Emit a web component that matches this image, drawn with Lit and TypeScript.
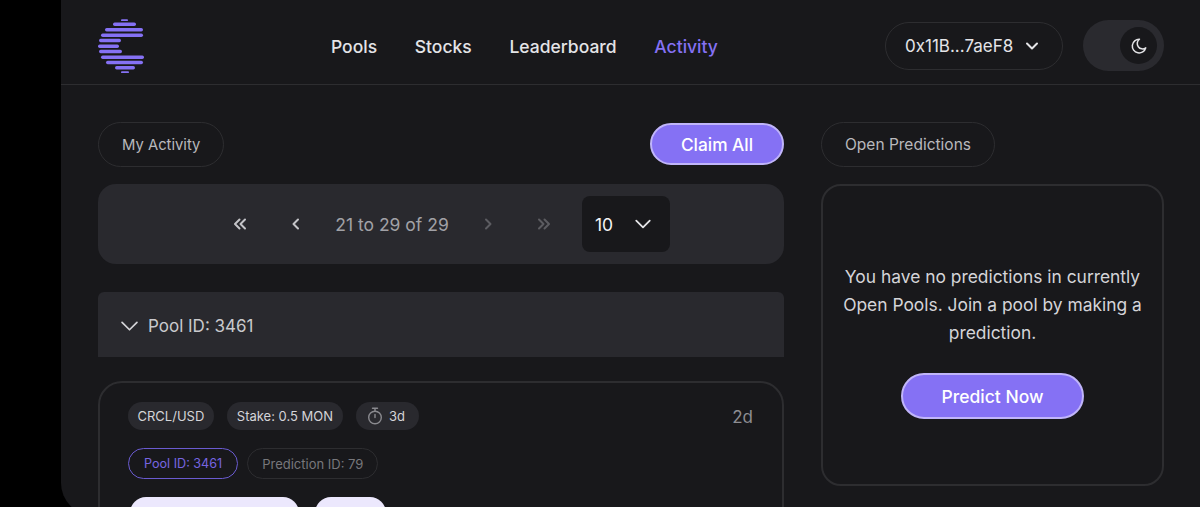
import { LitElement, html, svg, css } from "lit";
import { customElement } from "lit/decorators.js";

@customElement("app-root")
export class AppRoot extends LitElement {
  static styles = css`
    :host { display: block; width: 1200px; height: 507px; overflow: hidden; background: #000; font-family: Inter, "Liberation Sans", sans-serif; }
    * { box-sizing: border-box; }
    .panel { margin-left: 61px; width: 1139px; height: 515px; background: #18181b; border-bottom-left-radius: 32px; overflow: hidden; }
    .header { height: 85px; border-bottom: 1px solid #2d2d30; display: flex; align-items: center; padding: 9px 36px 0 37px; }
    .logo { width: 46px; height: 55px; flex: none; display: block; }
    .nav { display: flex; gap: 37.7px; margin-left: 187px; font-size: 17.5px; font-weight: 500; color: #e4e4e7; }
    .nav .on { color: #8571f4; }
    .wallet { margin: -2px 0 0 auto; width: 178px; height: 48px; border: 1px solid #2d2d30; border-radius: 24px; display: flex; align-items: center; padding-left: 19px; gap: 11px; font-size: 17px; color: #e4e4e7; }
    .toggle { margin: -2px 0 0 20px; width: 81px; height: 51px; border-radius: 26px; background: #2a2a2f; display: flex; align-items: center; justify-content: flex-end; padding-right: 7px; }
    .knob { width: 37px; height: 37px; border-radius: 50%; background: #18181b; display: flex; align-items: center; justify-content: center; }
    .main { display: grid; grid-template-columns: 686px 343px; column-gap: 37px; padding: 37px 36px 0 37px; }
    .left, .right { display: flex; flex-direction: column; }
    .top { display: flex; justify-content: space-between; align-items: flex-start; height: 45px; margin-bottom: 17px; }
    .tab { height: 45px; padding: 0 23px; border: 1px solid #2d2d30; border-radius: 23px; display: flex; align-items: center; font-size: 15.5px; color: #b9b9bd; width: fit-content; }
    .tab.my { font-size: 14.8px; }
    .cta { background: #8571f4; border: 2px solid #c0b5fa; color: #fff; border-radius: 24px; display: flex; align-items: center; justify-content: center; font-weight: 500; }
    .claim { width: 134px; height: 42px; font-size: 17.3px; margin-top: 1px; }
    .pager { height: 80px; border-radius: 18px; background: #29292e; display: flex; align-items: center; justify-content: center; color: #a1a1a6; font-size: 17.5px; }
    .pg { width: 56px; display: flex; justify-content: center; }
    .range { width: 136px; text-align: center; color: #a1a1a6; }
    .size { width: 88px; height: 56px; border-radius: 8px; background: #18181b; margin-left: 10px; display: flex; align-items: center; padding: 0 18px 0 13px; justify-content: space-between; color: #f4f4f5; font-size: 17.5px; }
    .pool { margin-top: 28px; height: 65px; background: #29292e; border-radius: 6px 6px 0 0; display: flex; align-items: center; padding: 2px 0 0 23px; gap: 10px; font-size: 17px; color: #c9c9cd; }
    .card { margin-top: 24px; height: 300px; border: 2px solid #2d2d30; border-radius: 24px; padding: 19px 28px; position: relative; }
    .row { display: flex; gap: 13.5px; }
    .chip { height: 28px; padding: 0 9.5px; border-radius: 14px; background: #29292e; display: flex; align-items: center; gap: 6px; font-size: 13px; color: #d4d4d8; }
    .chip.timer { padding: 0 14px 0 11px; }
    .age { position: absolute; right: 29px; top: 24px; font-size: 17px; color: #8d8d92; }
    .row2 { margin-top: 18px; gap: 9px; }
    .tag { height: 31px; padding: 0 14px; border-radius: 16px; border: 1px solid #2d2d30; display: flex; align-items: center; font-size: 13px; color: #77777c; }
    .tag.on { border-color: #6a5bd0; color: #7765e0; font-size: 12.6px; padding: 0 15px; }
    .row3 { margin-top: 18px; gap: 16px; padding-left: 2px; }
    .stub { height: 40px; border-radius: 16px; background: #ece8fd; }
    .stub.wide { width: 169px; }
    .stub.small { width: 71px; }
    .empty { height: 302px; border: 2px solid #2d2d30; border-radius: 20px; display: flex; flex-direction: column; align-items: center; padding: 77px 16px 0; }
    .empty p { margin: 0; font-size: 17.4px; line-height: 28px; color: #d4d4d8; text-align: center; }
    .predict { width: 183px; height: 46px; margin-top: 26px; padding-top: 1px; font-size: 17.5px; }
    svg { display: block; flex: none; }
  `;

  private logo() {
    const bars: number[][] = [
      [121, 128, 19.7, 1.8], [113, 136, 23.7, 3.4], [105, 143, 29.3, 3.4], [101, 143, 34.7, 3.4],
      [99, 121, 40, 3.4], [98, 119, 45.7, 3.4], [99, 122, 51, 3.4], [101, 144, 56.7, 3.4],
      [106, 143, 62, 3.4], [115, 135, 67.3, 3.4], [121, 129, 71.7, 1.8],
    ];
    return html`<svg class="logo" viewBox="98 18.5 46 55" fill="#8571f4">
      ${bars.map(([a, b, y, h]) => svg`<rect x=${a} y=${y - h / 2} width=${b - a} height=${h} rx=${h / 2} />`)}
    </svg>`;
  }

  private chevron(d: string, stroke: string, size = 16, sw = 2) {
    return html`<svg width=${size} height=${size} viewBox="0 0 16 16" fill="none" stroke=${stroke} stroke-width=${sw} stroke-linecap="round" stroke-linejoin="round"><path d=${d} /></svg>`;
  }

  render() {
    const down = "M3 5.5 8 10.5 13 5.5";
    return html`<div class="panel">
      <header class="header">
        ${this.logo()}
        <nav class="nav"><span>Pools</span><span>Stocks</span><span>Leaderboard</span><span class="on">Activity</span></nav>
        <div class="wallet"><span>0x11B...7aeF8</span>${this.chevron(down, "#e4e4e7", 16)}</div>
        <div class="toggle"><div class="knob">
          <svg width="18" height="18" viewBox="0 0 20 20" fill="none" stroke="#e4e4e7" stroke-width="1.7" stroke-linecap="round" stroke-linejoin="round"><path d="M10.5 2.5a7.6 7.6 0 1 0 7 9.6 5 5 0 0 1-7-9.6Z" /></svg>
        </div></div>
      </header>
      <div class="main">
        <section class="left">
          <div class="top"><div class="tab my">My Activity</div><div class="cta claim">Claim All</div></div>
          <div class="pager">
            <span class="pg">${this.chevron("M7.5 3.5 3 8l4.5 4.5M13 3.5 8.5 8l4.5 4.5", "#c4c4c8")}</span>
            <span class="pg">${this.chevron("M10 3.5 5.5 8l4.5 4.5", "#c4c4c8")}</span>
            <span class="range">21 to 29 of 29</span>
            <span class="pg">${this.chevron("M6 3.5 10.5 8 6 12.5", "#5c5c61")}</span>
            <span class="pg">${this.chevron("M3 3.5 7.5 8 3 12.5M8.5 3.5 13 8l-4.5 4.5", "#5c5c61")}</span>
            <div class="size"><span>10</span>${this.chevron("M2 5l6 6 6-6", "#e4e4e7", 18, 1.6)}</div>
          </div>
          <div class="pool">${this.chevron("M1 5l7 7 7-7", "#d4d4d8", 17, 1.6)}<span>Pool ID: 3461</span></div>
          <div class="card">
            <span class="age">2d</span>
            <div class="row">
              <span class="chip">CRCL/USD</span><span class="chip">Stake: 0.5 MON</span>
              <span class="chip timer"><svg width="16" height="18" viewBox="0 0 16 18" fill="none" stroke="#8a8a8f" stroke-width="1.4" stroke-linecap="round"><circle cx="8" cy="10.5" r="6.3" /><path d="M5.5 1.2h5M8 1.2v3M8 7.5v3" /></svg>3d</span>
            </div>
            <div class="row row2"><span class="tag on">Pool ID: 3461</span><span class="tag">Prediction ID: 79</span></div>
            <div class="row row3"><div class="stub wide"></div><div class="stub small"></div></div>
          </div>
        </section>
        <aside class="right">
          <div class="top"><div class="tab">Open Predictions</div></div>
          <div class="empty">
            <p>You have no predictions in currently Open Pools. Join a pool by making a prediction.</p>
            <div class="cta predict">Predict Now</div>
          </div>
        </aside>
      </div>
    </div>`;
  }
}
